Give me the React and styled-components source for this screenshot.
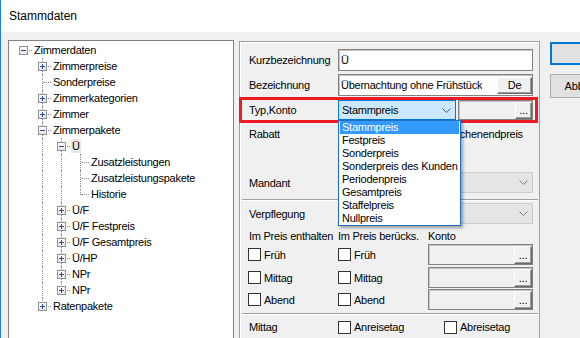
import React from 'react';
import styled, { createGlobalStyle } from 'styled-components';

const GlobalStyle = createGlobalStyle`
  html, body {
    margin: 0;
    padding: 0;
    background: #f0f0f0;
    overflow: hidden;
  }
  body {
    font-family: "Liberation Sans", Arial, sans-serif;
    font-size: 11px;
    letter-spacing: -0.25px;
    color: #000;
  }
`;

const Window = styled.div`
  width: 580px;
  height: 338px;
  box-sizing: border-box;
  border-left: 1px solid #2b7bd3;
  background: #f0f0f0;
  display: flex;
  flex-direction: column;
  overflow: hidden;
`;

const TitleBar = styled.div`
  flex: none;
  height: 32px;
  background: #fff;
  display: flex;
  align-items: center;
  padding-left: 8px;
  font-size: 12px;
  letter-spacing: 0;
`;

const Body = styled.div`
  display: flex;
  align-items: flex-start;
  padding: 8px 0 0 7px;
`;

/* ---------- tree ---------- */

const Tree = styled.ul`
  flex: none;
  list-style: none;
  margin: 0;
  padding: 1px 0 0 4px;
  width: 226px;
  height: 310px;
  box-sizing: border-box;
  background: #fff;
  border: 1px solid #828282;
`;

const TreeRow = styled.li`
  display: flex;
  align-items: center;
  height: 16px;
`;

const hasVertical = (l) => l === 'tee' || l === 'pass' || l === 'ell';
const hasHorizontal = (l) => l === 'tee' || l === 'ell' || l === 'root';

const Indent = styled.span`
  position: relative;
  flex: none;
  width: 19px;
  height: 16px;

  &::before {
    content: '';
    position: absolute;
    left: 10px;
    top: 0;
    height: ${(p) => (p.$line === 'ell' ? '9px' : '16px')};
    border-left: 1px dotted #8f8f8f;
    display: ${(p) => (hasVertical(p.$line) ? 'block' : 'none')};
  }

  &::after {
    content: '';
    position: absolute;
    left: 11px;
    top: 8px;
    width: 8px;
    border-top: 1px dotted #8f8f8f;
    display: ${(p) => (hasHorizontal(p.$line) ? 'block' : 'none')};
  }
`;

const Expander = styled.span`
  position: absolute;
  left: 6px;
  top: 4px;
  width: 9px;
  height: 9px;
  box-sizing: border-box;
  border: 1px solid #919191;
  background: linear-gradient(#ffffff, #e4e4e4);
  z-index: 1;

  &::before {
    content: '';
    position: absolute;
    left: 1px;
    top: 3px;
    width: 5px;
    height: 1px;
    background: #2a4c9c;
  }

  &::after {
    content: '';
    position: absolute;
    left: 3px;
    top: 1px;
    width: 1px;
    height: 5px;
    background: #2a4c9c;
    display: ${(p) => (p.$open ? 'none' : 'block')};
  }
`;

const NodeLabel = styled.span`
  margin-left: 1px;
  padding: 0 1px;
  height: 14px;
  line-height: 14px;
  white-space: nowrap;
  background: ${(p) => (p.$selected ? '#e9e9e9' : 'transparent')};
`;

const nodes = [
  { label: 'Zimmerdaten', lines: ['root'], box: 'open' },
  { label: 'Zimmerpreise', lines: ['none', 'tee'], box: 'closed' },
  { label: 'Sonderpreise', lines: ['none', 'tee'] },
  { label: 'Zimmerkategorien', lines: ['none', 'tee'], box: 'closed' },
  { label: 'Zimmer', lines: ['none', 'tee'], box: 'closed' },
  { label: 'Zimmerpakete', lines: ['none', 'tee'], box: 'open' },
  { label: 'Ü', lines: ['none', 'pass', 'tee'], box: 'open', selected: true },
  { label: 'Zusatzleistungen', lines: ['none', 'pass', 'pass', 'tee'] },
  { label: 'Zusatzleistungspakete', lines: ['none', 'pass', 'pass', 'tee'] },
  { label: 'Historie', lines: ['none', 'pass', 'pass', 'ell'] },
  { label: 'Ü/F', lines: ['none', 'pass', 'tee'], box: 'closed' },
  { label: 'Ü/F Festpreis', lines: ['none', 'pass', 'tee'], box: 'closed' },
  { label: 'Ü/F Gesamtpreis', lines: ['none', 'pass', 'tee'], box: 'closed' },
  { label: 'Ü/HP', lines: ['none', 'pass', 'tee'], box: 'closed' },
  { label: 'NPr', lines: ['none', 'pass', 'tee'], box: 'closed' },
  { label: 'NPr', lines: ['none', 'pass', 'ell'], box: 'closed' },
  { label: 'Ratenpakete', lines: ['none', 'ell'], box: 'closed' },
];

/* ---------- form panel ---------- */

const Panel = styled.div`
  flex: none;
  width: 301px;
  height: 310px;
  margin: 1px 0 0 5px;
  box-sizing: border-box;
  border: 1px solid #a0a0a0;
  box-shadow: inset 1px 1px 0 #fff;
  display: flex;
  flex-direction: column;
`;

const FormRow = styled.div`
  display: grid;
  grid-template-columns: ${(p) => p.$cols || '89px 1fr'};
  align-items: center;
  height: ${(p) => p.$h}px;
  margin-top: ${(p) => p.$top}px;
  padding: 0 6px 0 9px;
  white-space: nowrap;
`;

const HighlightRow = styled(FormRow)`
  box-sizing: border-box;
  margin: 1px 1px 0 -1px;
  padding: 0 2px 0 7px;
  border: 3px solid #ed1c24;
  column-gap: 0;
`;

const Field = styled.div`
  box-sizing: border-box;
  height: ${(p) => p.$h}px;
  display: flex;
  align-items: center;
  justify-content: space-between;
  overflow: hidden;
  padding: 0 0 0 2px;
  background: ${(p) => (p.$disabled ? '#f0f0f0' : '#fff')};
  border: 1px solid #828282;
  box-shadow: inset 1px 1px 0 #c4c4c4;
  white-space: nowrap;
`;

const FieldText = styled.span`
  overflow: hidden;
`;

const SmallButton = styled.span`
  box-sizing: border-box;
  flex: none;
  width: ${(p) => p.$w}px;
  height: ${(p) => p.$h}px;
  display: flex;
  align-items: center;
  justify-content: center;
  background: #f0f0f0;
  border: 1px solid;
  border-color: #fff #696969 #696969 #fff;
  box-shadow: inset -1px -1px 0 #a0a0a0;
  overflow: hidden;
`;

const Combo = styled.div`
  position: relative;
  box-sizing: border-box;
  height: ${(p) => p.$h}px;
  display: flex;
  align-items: center;
  justify-content: space-between;
  padding: 0 4px 0 3px;
  background: ${(p) => (p.$active ? '#cce8ff' : '#e5e5e5')};
  border: 1px solid ${(p) => (p.$active ? '#0078d7' : '#cccccc')};
  color: ${(p) => (p.$active ? '#000' : '#6d6d6d')};
`;

const Chevron = ({ color }) => (
  <svg width="9" height="5" viewBox="0 0 9 5" style={{ display: 'block' }}>
    <polyline points="0.5,0.5 4.5,4.5 8.5,0.5" fill="none" stroke={color} strokeWidth="1" />
  </svg>
);

const Popup = styled.ul`
  position: absolute;
  left: -1px;
  top: calc(100% + 1px);
  z-index: 5;
  width: 123px;
  margin: 0;
  padding: 0;
  list-style: none;
  box-sizing: border-box;
  background: #fff;
  border: 1px solid #1f6fc5;
  box-shadow: 2px 2px 3px rgba(0, 0, 0, 0.35);
  color: #000;
`;

const PopupItem = styled.li`
  height: 13px;
  line-height: 13px;
  margin: 0 1px;
  padding-left: 2px;
  white-space: nowrap;
  background: ${(p) => (p.$selected ? '#3399ff' : 'transparent')};
  color: ${(p) => (p.$selected ? '#fff' : '#000')};
`;

const Separator = styled.div`
  height: 0;
  margin: ${(p) => p.$top}px 1px 0 2px;
  border-top: 1px solid #a0a0a0;
  border-bottom: 1px solid #fff;
`;

const Check = styled.span`
  display: inline-flex;
  align-items: center;
  gap: 3px;
  margin-left: ${(p) => p.$ml || 0}px;
  white-space: nowrap;
`;

const Box = styled.span`
  flex: none;
  width: 13px;
  height: 13px;
  box-sizing: border-box;
  border: 1px solid #333;
  background: #fff;
`;

const KontoField = () => (
  <Field $h={21} $disabled>
    <span />
    <SmallButton $w={18} $h={18}>...</SmallButton>
  </Field>
);

/* ---------- dialog buttons ---------- */

const SideButtons = styled.div`
  flex: none;
  display: flex;
  flex-direction: column;
  gap: 9px;
  margin: 2px 0 0 10px;
`;

const DialogButton = styled.button`
  box-sizing: border-box;
  width: 82px;
  height: ${(p) => (p.$default ? 23 : 24)}px;
  padding: 0;
  font: inherit;
  color: #000;
  background: #e1e1e1;
  border: ${(p) => (p.$default ? '2px solid #0078d7' : '1px solid #adadad')};
`;

const types = [
  'Stammpreis',
  'Festpreis',
  'Sonderpreis',
  'Sonderpreis des Kunden',
  'Periodenpreis',
  'Gesamtpreis',
  'Staffelpreis',
  'Nullpreis',
];

const meals = ['Früh', 'Mittag', 'Abend'];
const mealTops = [1, 2, 1];

export default function App() {
  return (
    <>
      <GlobalStyle />
      <Window>
        <TitleBar>Stammdaten</TitleBar>
        <Body>
          <Tree>
            {nodes.map((n, i) => (
              <TreeRow key={i}>
                {n.lines.map((l, j) => (
                  <Indent key={j} $line={l}>
                    {j === n.lines.length - 1 && n.box && <Expander $open={n.box === 'open'} />}
                  </Indent>
                ))}
                <NodeLabel $selected={n.selected}>{n.label}</NodeLabel>
              </TreeRow>
            ))}
          </Tree>

          <Panel>
            <FormRow $h={22} $top={7}>
              <span>Kurzbezeichnung</span>
              <Field $h={22}>
                <FieldText>Ü</FieldText>
              </Field>
            </FormRow>
            <FormRow $h={22} $top={3}>
              <span>Bezeichnung</span>
              <Field $h={22}>
                <FieldText>Übernachtung ohne Frühstück</FieldText>
                <SmallButton $w={35} $h={17}>De</SmallButton>
              </Field>
            </FormRow>
            <HighlightRow $h={26} $cols="89px 118px 2px 1fr">
              <span>Typ,Konto</span>
              <Combo $h={20} $active>
                <span>Stammpreis</span>
                <Chevron color="#555" />
                <Popup>
                  {types.map((t, i) => (
                    <PopupItem key={t} $selected={i === 0}>{t}</PopupItem>
                  ))}
                </Popup>
              </Combo>
              <span />
              <Field $h={20} $disabled>
                <span />
                <SmallButton $w={17} $h={17}>...</SmallButton>
              </Field>
            </HighlightRow>
            <FormRow $h={16} $top={3} $cols="89px 90px 1fr">
              <span>Rabatt</span>
              <span />
              <Check>
                <Box />
                Wochenendpreis
              </Check>
            </FormRow>
            <FormRow $h={21} $top={30}>
              <span>Mandant</span>
              <Combo $h={21}>
                <span />
                <Chevron color="#7a7a7a" />
              </Combo>
            </FormRow>
            <Separator $top={6} />
            <FormRow $h={21} $top={2}>
              <span>Verpflegung</span>
              <Combo $h={21}>
                <span />
                <Chevron color="#7a7a7a" />
              </Combo>
            </FormRow>
            <FormRow $h={14} $top={5} $cols="89px 90px 1fr">
              <span>Im Preis enthalten</span>
              <span>Im Preis berücks.</span>
              <span>Konto</span>
            </FormRow>
            {meals.map((m, i) => (
              <FormRow key={m} $h={21} $top={mealTops[i]} $cols="89px 90px 1fr">
                <Check $ml={-1}>
                  <Box />
                  {m}
                </Check>
                <Check>
                  <Box />
                  {m}
                </Check>
                <KontoField />
              </FormRow>
            ))}
            <Separator $top={3} />
            <FormRow $h={14} $top={5} $cols="89px 90px 1fr">
              <span>Mittag</span>
              <Check>
                <Box />
                Anreisetag
              </Check>
              <Check $ml={16}>
                <Box />
                Abreisetag
              </Check>
            </FormRow>
          </Panel>

          <SideButtons>
            <DialogButton $default>OK</DialogButton>
            <DialogButton>Abbrechen</DialogButton>
          </SideButtons>
        </Body>
      </Window>
    </>
  );
}
